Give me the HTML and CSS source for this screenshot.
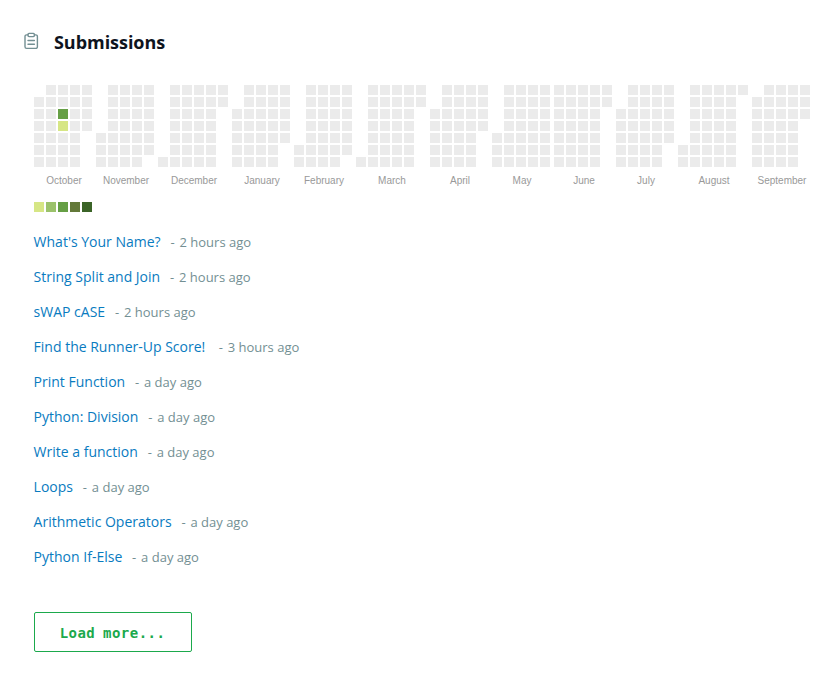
FILE: index.html
```html
<!DOCTYPE html>
<html lang="en">
<head>
<meta charset="utf-8">
<title>Submissions</title>
<link rel="stylesheet" href="styles.css">
</head>
<body>
<main class="panel">
  <header class="heading">
    <svg class="heading-icon" width="16" height="18" viewBox="0 0 16 18" fill="none" stroke="#738f93" stroke-width="1.4" stroke-linecap="round" stroke-linejoin="round">
      <path d="M5 2.9H3.6a1.6 1.6 0 0 0-1.6 1.6v10.3a1.6 1.6 0 0 0 1.6 1.6h9.2a1.6 1.6 0 0 0 1.6-1.6V4.5a1.6 1.6 0 0 0-1.6-1.6h-1.4"/>
      <path d="M6 1.4h4.4a1 1 0 0 1 1 1v1.2a1 1 0 0 1-1 1H6a1 1 0 0 1-1-1V2.4a1 1 0 0 1 1-1zM5 8.500h6.400M5 12.300h6.400"/>
    </svg>
    <h1 class="title">Submissions</h1>
  </header>
  <section class="content">
    <div class="calendar" id="calendar"></div>
    <div class="legend"><i class="day level-1"></i><i class="day level-2"></i><i class="day level-3"></i><i class="day level-4"></i><i class="day level-5"></i></div>
    <ul class="list">
      <li class="item"><a class="link">What's Your Name?</a><span class="time"><span class="dash">- </span>2 hours ago</span></li>
      <li class="item"><a class="link">String Split and Join</a><span class="time"><span class="dash">- </span>2 hours ago</span></li>
      <li class="item"><a class="link">sWAP cASE</a><span class="time"><span class="dash">- </span>2 hours ago</span></li>
      <li class="item"><a class="link">Find the Runner-Up Score!&nbsp;</a><span class="time"><span class="dash">- </span>3 hours ago</span></li>
      <li class="item"><a class="link">Print Function</a><span class="time"><span class="dash">- </span>a day ago</span></li>
      <li class="item"><a class="link">Python: Division</a><span class="time"><span class="dash">- </span>a day ago</span></li>
      <li class="item"><a class="link">Write a function</a><span class="time"><span class="dash">- </span>a day ago</span></li>
      <li class="item"><a class="link">Loops</a><span class="time"><span class="dash">- </span>a day ago</span></li>
      <li class="item"><a class="link">Arithmetic Operators</a><span class="time"><span class="dash">- </span>a day ago</span></li>
      <li class="item"><a class="link">Python If-Else</a><span class="time"><span class="dash">- </span>a day ago</span></li>
    </ul>
    <button class="more" type="button">Load more...</button>
  </section>
</main>
<script src="calendar.js"></script>
</body>
</html>
```

FILE: styles.css
```css
* { box-sizing: border-box; }
body { margin: 0; background: #fff; font-family: "Open Sans", sans-serif; }
.panel { padding: 28px 20px 0 23px; }
.heading { display: flex; align-items: center; height: 28px; }
.heading-icon { margin: -3px 15px 0 0; flex: none; }
.title { margin: 0; font-size: 18px; line-height: 28px; font-weight: 700; color: #0e141e; letter-spacing: -.04px; }
.content { padding: 29px 0 0 11px; }
.calendar { display: flex; gap: 2px; height: 117px; }
.month { flex: none; }
.days { display: grid; grid-template-rows: repeat(7, 10px); grid-auto-columns: 10px; grid-auto-flow: column; gap: 2px; padding-right: 2px; }
.month-name { margin-top: 8px; text-align: center; font: 10px/12px "Liberation Sans", sans-serif; color: #999; }
.day { width: 10px; height: 10px; background: #ebebeb; }
.day.blank { background: none; }
.day.level-1 { background: #d6e685; }
.day.level-2 { background: #9bc26b; }
.day.level-3 { background: #669f45; }
.day.level-4 { background: #637939; }
.day.level-5 { background: #3b6427; }
.legend { display: flex; gap: 2px; }
.list { list-style: none; margin: 13px 0 0 -.4px; padding: 0; }
.item { display: flex; align-items: baseline; height: 35px; line-height: 34px; white-space: pre; }
.link { font-size: 14px; color: #097bbf; }
.time { margin-left: 9.8px; font-size: 13px; color: #738f93; }
.dash { margin-right: 1.5px; }
.more { display: block; width: 158px; height: 40px; margin-top: 37px; padding: 2px 1px 0 0; border: 1px solid #1ba94c; border-radius: 2px; background: #fff; color: #1ba94c; font: 700 14px/36px "DejaVu Sans Mono", monospace; letter-spacing: .45px; word-spacing: -1px; }
```

FILE: calendar.js
```js
// Each month: name, weekday of its first day, number of days.
const months = [
  ["October", 1, 31], ["November", 4, 30], ["December", 6, 31],
  ["January", 2, 31], ["February", 5, 29], ["March", 6, 31],
  ["April", 2, 30], ["May", 4, 31], ["June", 0, 30],
  ["July", 2, 31], ["August", 5, 31], ["September", 1, 30]
];
const activity = { "October-16": "level-3", "October-17": "level-1" };

const cell = (cls) => `<i class="day ${cls}"></i>`;
document.getElementById("calendar").innerHTML = months.map(([name, start, count]) => {
  let cells = "";
  for (let i = 0; i < start; i++) cells += cell("blank");
  for (let d = 1; d <= count; d++) cells += cell(activity[`${name}-${d}`] || "");
  return `<div class="month"><div class="days">${cells}</div><div class="month-name">${name}</div></div>`;
}).join("");
```
